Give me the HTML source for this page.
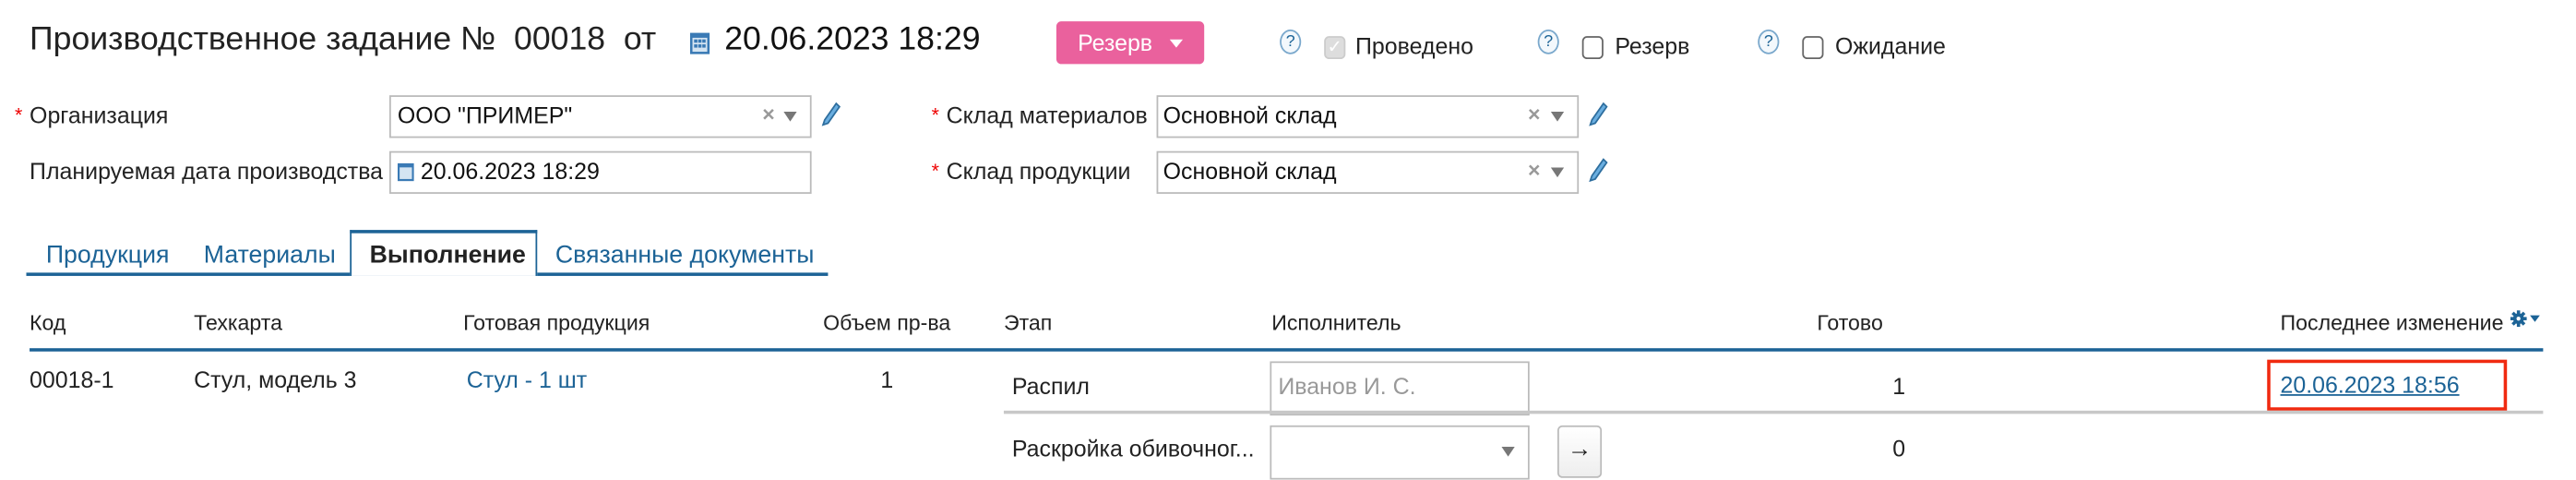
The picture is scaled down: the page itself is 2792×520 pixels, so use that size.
<!DOCTYPE html>
<html><head><meta charset="utf-8"><style>
html,body{margin:0;padding:0;background:#fff;width:2792px;height:516px;overflow:hidden}
#w{position:absolute;left:0;top:0;width:1568px;height:290px;transform:scale(1.78061,1.7793);transform-origin:0 0;font-family:"Liberation Sans",Arial,sans-serif;font-size:14px;color:#333}
.a{position:absolute;white-space:nowrap}
.in{position:absolute;border:1px solid #bbb;background:#fff;box-sizing:border-box}
.st{color:#e00;font-size:12px}
.lnk{color:#1c6396}
.q{position:absolute;width:13px;height:15px;border:1px solid #7aa8cc;border-radius:50%;box-sizing:border-box;font-size:10px;color:#1c6396;text-align:center;line-height:13px;background:#f3f8fc}
.cb{position:absolute;width:13px;height:14px;border:1px solid #666;border-radius:3px;box-sizing:border-box}
.xx{position:absolute;color:#999;font-size:13px;font-weight:bold}
.tri{position:absolute;width:0;height:0;border-left:4px solid transparent;border-right:4px solid transparent;border-top:6px solid #777}
</style></head><body><div id="w">
<div class="a" style="left:18px;top:13px;font-size:20px;color:#222">Производственное задание №&nbsp; 00018&nbsp; от</div>
<svg class="a" style="left:420px;top:18px" width="12" height="15" viewBox="0 0 12 15"><rect x="0" y="2" width="12" height="13" fill="#3a7ab5"/><rect x="1.5" y="5" width="9" height="8.5" fill="#d4e4f2"/><g fill="#3a7ab5"><rect x="2.5" y="6" width="2" height="2"/><rect x="5" y="6" width="2" height="2"/><rect x="7.5" y="6" width="2" height="2"/><rect x="2.5" y="9" width="2" height="2"/><rect x="5" y="9" width="2" height="2"/><rect x="7.5" y="9" width="2" height="2"/></g></svg>
<div class="a" style="left:441px;top:13px;font-size:20px;color:#111">20.06.2023 18:29</div>
<div class="a" style="left:643px;top:13px;width:90px;height:26px;background:#ea619d;border-radius:3px;color:#fff;font-size:14px;line-height:26px;text-indent:13px">Резерв<span style="position:absolute;left:69px;top:11px;border-left:4px solid transparent;border-right:4px solid transparent;border-top:5px solid #fff"></span></div>
<div class="q" style="left:779px;top:18px">?</div>
<div class="cb" style="left:806px;top:22px;border-color:#ccc;background:#ddd;color:#fff;font-size:11px;line-height:12px;text-align:center">✓</div>
<div class="a" style="left:825px;top:20px;color:#222">Проведено</div>
<div class="q" style="left:936px;top:18px">?</div>
<div class="cb" style="left:963px;top:22px"></div>
<div class="a" style="left:983px;top:20px;color:#222">Резерв</div>
<div class="q" style="left:1070px;top:18px">?</div>
<div class="cb" style="left:1097px;top:22px"></div>
<div class="a" style="left:1117px;top:20px;color:#222">Ожидание</div>

<div class="a" style="left:9px;top:61px"><span class="st">*</span></div>
<div class="a" style="left:18px;top:62px;color:#222">Организация</div>
<div class="in" style="left:237px;top:58px;width:257px;height:26px"></div>
<div class="a" style="left:242px;top:62px;color:#111">ООО "ПРИМЕР"</div>
<div class="xx" style="left:464px;top:62px">×</div><div class="tri" style="left:477px;top:68px"></div>
<svg class="a" style="left:500px;top:62px" width="12" height="15"><path d="M9 1l2 2-7 10-3 1 1-3z" fill="#6aaee0" stroke="#2e6e9e" stroke-width="1"/></svg>
<div class="a" style="left:567px;top:61px"><span class="st">*</span></div>
<div class="a" style="left:576px;top:62px;color:#222">Склад материалов</div>
<div class="in" style="left:704px;top:58px;width:257px;height:26px"></div>
<div class="a" style="left:708px;top:62px;color:#111">Основной склад</div>
<div class="xx" style="left:930px;top:62px">×</div><div class="tri" style="left:944px;top:68px"></div>
<svg class="a" style="left:967px;top:62px" width="12" height="15"><path d="M9 1l2 2-7 10-3 1 1-3z" fill="#6aaee0" stroke="#2e6e9e" stroke-width="1"/></svg>

<div class="a" style="left:18px;top:96px;color:#222">Планируемая дата производства</div>
<div class="in" style="left:237px;top:92px;width:257px;height:26px"></div>
<svg class="a" style="left:242px;top:97px" width="10" height="14" viewBox="0 0 12 15"><rect x="0" y="2" width="12" height="13" fill="#3a7ab5"/><rect x="1.5" y="5" width="9" height="8.5" fill="#d4e4f2"/></svg>
<div class="a" style="left:256px;top:96px;color:#111">20.06.2023 18:29</div>
<div class="a" style="left:567px;top:95px"><span class="st">*</span></div>
<div class="a" style="left:576px;top:96px;color:#222">Склад продукции</div>
<div class="in" style="left:704px;top:92px;width:257px;height:26px"></div>
<div class="a" style="left:708px;top:96px;color:#111">Основной склад</div>
<div class="xx" style="left:930px;top:96px">×</div><div class="tri" style="left:944px;top:102px"></div>
<svg class="a" style="left:967px;top:96px" width="12" height="15"><path d="M9 1l2 2-7 10-3 1 1-3z" fill="#6aaee0" stroke="#2e6e9e" stroke-width="1"/></svg>

<div class="a" style="left:16px;top:166px;width:488px;height:2px;background:#1c6396"></div>
<div class="a" style="left:213px;top:140px;width:114px;height:28px;border:1px solid #1c6396;border-top-width:2px;border-bottom:none;background:#fff;box-sizing:border-box"></div>
<div class="a lnk" style="left:28px;top:147px;font-size:15px">Продукция</div>
<div class="a lnk" style="left:124px;top:147px;font-size:15px">Материалы</div>
<div class="a" style="left:225px;top:147px;font-size:15px;font-weight:bold;color:#222">Выполнение</div>
<div class="a lnk" style="left:338px;top:147px;font-size:15px">Связанные документы</div>

<div class="a" style="left:18px;top:189px;color:#222;font-size:13px">Код</div>
<div class="a" style="left:118px;top:189px;color:#222;font-size:13px">Техкарта</div>
<div class="a" style="left:282px;top:189px;color:#222;font-size:13px">Готовая продукция</div>
<div class="a" style="left:501px;top:189px;color:#222;font-size:13px">Объем пр-ва</div>
<div class="a" style="left:611px;top:189px;color:#222;font-size:13px">Этап</div>
<div class="a" style="left:774px;top:189px;color:#222;font-size:13px">Исполнитель</div>
<div class="a" style="left:1106px;top:189px;color:#222;font-size:13px">Готово</div>
<div class="a" style="left:1388px;top:189px;color:#222;font-size:13px">Последнее изменение</div>
<svg class="a" style="left:1528px;top:188px" width="20" height="12" viewBox="0 0 20 12"><g fill="#1c6396"><rect x="4" y="1" width="2" height="10"/><rect x="0" y="5" width="10" height="2"/><rect x="4" y="1" width="2" height="10" transform="rotate(45 5 6)"/><rect x="4" y="1" width="2" height="10" transform="rotate(-45 5 6)"/><circle cx="5" cy="6" r="3.3"/></g><circle cx="5" cy="6" r="1.2" fill="#fff"/><path d="M12 4h6l-3 4z" fill="#1c6396"/></svg>
<div class="a" style="left:18px;top:212px;width:1530px;height:2px;background:#1c6396"></div>

<div class="a" style="left:18px;top:223px;color:#222">00018-1</div>
<div class="a" style="left:118px;top:223px;color:#222">Стул, модель 3</div>
<div class="a lnk" style="left:284px;top:223px">Стул - 1 шт</div>
<div class="a" style="left:536px;top:223px;color:#222">1</div>
<div class="a" style="left:616px;top:227px;color:#222">Распил</div>
<div class="in" style="left:773px;top:220px;width:158px;height:33px"></div>
<div class="a" style="left:778px;top:227px;color:#999">Иванов И. С.</div>
<div class="a" style="left:1152px;top:227px;color:#222">1</div>
<div class="a" style="left:1380px;top:219px;width:146px;height:31px;border:2px solid #f02a10;box-sizing:border-box"></div>
<div class="a lnk" style="left:1388px;top:226px;text-decoration:underline">20.06.2023 18:56</div>
<div class="a" style="left:611px;top:250px;width:937px;height:2px;background:#c8c8c8"></div>
<div class="a" style="left:616px;top:265px;color:#222">Раскройка обивочног...</div>
<div class="in" style="left:773px;top:259px;width:158px;height:33px"></div>
<div class="tri" style="left:914px;top:272px"></div>
<div class="a" style="left:948px;top:259px;width:27px;height:32px;border:1px solid #bbb;border-radius:3px;box-sizing:border-box;background:linear-gradient(#fff,#eee);text-align:center;line-height:28px;color:#222;font-size:15px">→</div>
<div class="a" style="left:1152px;top:265px;color:#222">0</div>
</div></body></html>
